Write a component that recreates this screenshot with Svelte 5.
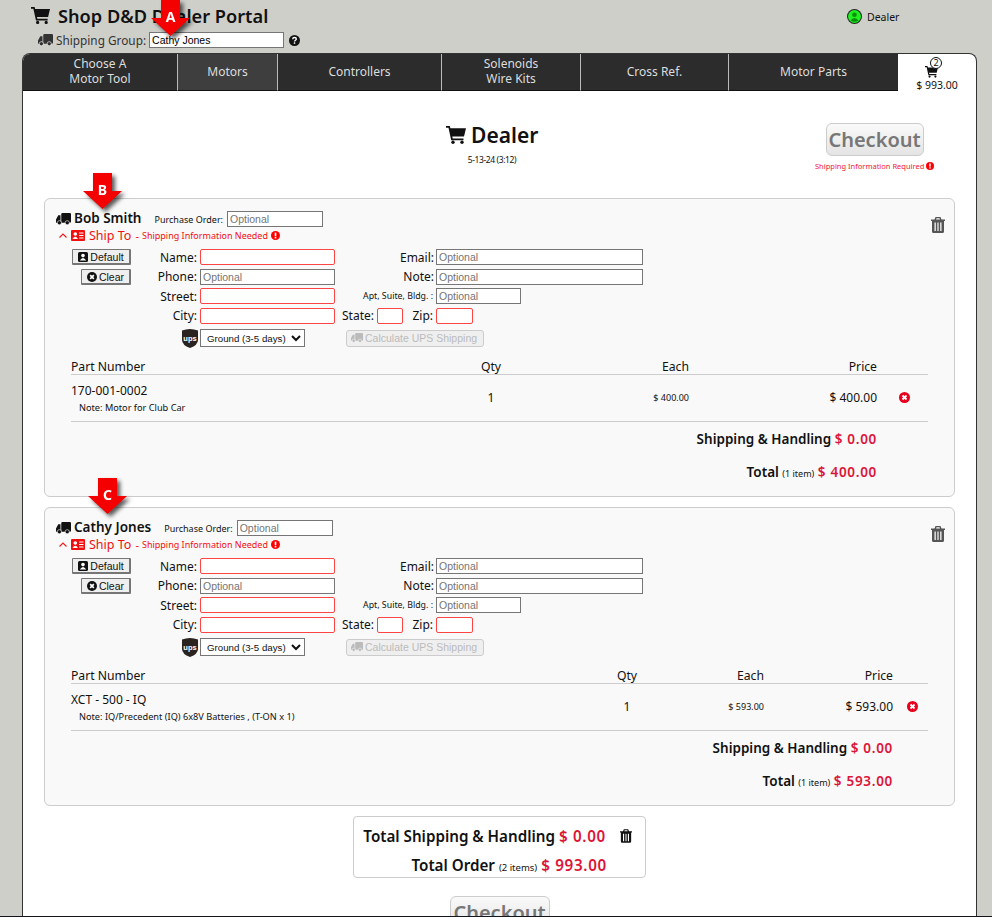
<script lang="ts">
	const tabs = [
		{ label: ['Choose A', 'Motor Tool'], width: 155 },
		{ label: ['Motors'], width: 100, active: true },
		{ label: ['Controllers'], width: 164 },
		{ label: ['Solenoids', 'Wire Kits'], width: 139 },
		{ label: ['Cross Ref.'], width: 148 },
		{ label: ['Motor Parts'], width: 169 }
	]

	const groups = [
		{
			name: 'Bob Smith',
			part: '170-001-0002',
			note: 'Note: Motor for Club Car',
			price: '$ 400.00',
			cols: '399px 42px 177px 188px 51px',
			pad: '51px'
		},
		{
			name: 'Cathy Jones',
			part: 'XCT - 500 - IQ',
			note: 'Note: IQ/Precedent (IQ) 6x8V Batteries , (T-ON x 1)',
			price: '$ 593.00',
			cols: '535px 42px 116px 129px 35px',
			pad: '35px'
		}
	]

	const arrows = [
		{ letter: 'A', x: 150, y: 0 },
		{ letter: 'B', x: 82, y: 173 },
		{ letter: 'C', x: 87, y: 478 }
	]
</script>

{#snippet truck(size = 15, color = '#111')}
	<svg class="icon" width={size} height={size * 0.8} viewBox="0 0 20 16" fill={color}>
		<path d="M7 1.5Q7 0 8.500 0H18.500Q20 0 20 1.500V11.500Q20 13 18.500 13H7ZM6 3V13H0V8.500L3 3Z" />
		<circle cx="4.500" cy="13" r="2.800" stroke="#fff" stroke-width=".8" />
		<circle cx="15" cy="13" r="2.800" stroke="#fff" stroke-width=".8" />
	</svg>
{/snippet}

{#snippet cart(size = 18)}
	<svg class="icon" width={size} height={size * 0.9} viewBox="0 0 20 18" fill="#111">
		<path d="M0 0H3.800L4.400 2.200H20L18 10.500H6.300L6.700 12.500H17.500V14.300H5.200L2.500 1.800H0Z" />
		<circle cx="7" cy="16.300" r="1.700" />
		<circle cx="16" cy="16.300" r="1.700" />
	</svg>
{/snippet}

{#snippet trash(color = '#555', width = 14, height = 16)}
	<svg class="icon" {width} {height} viewBox="0 0 14 16" fill={color}>
		<path d="M4.500 0H9.500L10.500 2.500H14V4H13V14.500Q13 16 11.500 16H2.500Q1 16 1 14.500V4H0V2.500H3.500ZM5.500 1.300 5 2.500H9L8.500 1.300ZM3.500 5.500V14H4.800V5.500ZM6.400 5.500V14H7.600V5.500ZM9.200 5.500V14H10.500V5.500Z" fill-rule="evenodd" />
	</svg>
{/snippet}

{#snippet alert(size = 9)}
	<svg class="icon" width={size} height={size} viewBox="0 0 10 10">
		<circle cx="5" cy="5" r="5" fill="#f00" />
		<rect x="4.100" y="1.800" width="1.800" height="4" fill="#fff" />
		<rect x="4.100" y="6.600" width="1.800" height="1.700" fill="#fff" />
	</svg>
{/snippet}

{#snippet cross(color = '#e8001c', size = 11)}
	<svg class="icon" width={size} height={size} viewBox="0 0 12 12">
		<circle cx="6" cy="6" r="6" fill={color} />
		<path d="M3.800 3.800 8.200 8.200M8.200 3.800 3.800 8.200" stroke="#fff" stroke-width="2" />
	</svg>
{/snippet}

<div class="page">
	<header>
		<h1>
			{@render cart(19)}
			<span>Shop D&amp;D Dealer Portal</span>
		</h1>
		<div class="status">
			<svg class="icon" width="15" height="15" viewBox="0 0 15 15">
				<circle cx="7.500" cy="7.500" r="7.500" fill="#222" />
				<circle cx="7.500" cy="7.500" r="6.500" fill="#1ff01f" />
				<circle cx="7.500" cy="5.800" r="2.300" fill="#0c8f0c" />
				<path d="M3.500 11.500Q7.500 6.500 11.500 11.500Q7.500 14 3.500 11.500Z" fill="#0c8f0c" />
			</svg>
			<span>Dealer</span>
		</div>
		<div class="group">
			{@render truck(15, '#333')}
			<label for="shipping-group">Shipping Group:</label>
			<input id="shipping-group" value="Cathy Jones" />
			<svg class="icon" width="11" height="11" viewBox="0 0 12 12">
				<circle cx="6" cy="6" r="6" fill="#111" />
				<path d="M4 4.600Q4.100 2.700 6 2.700Q8 2.700 8 4.300C8 5.700 6 5.700 6 7.100" fill="none" stroke="#fff" stroke-width="1.500" />
				<rect x="5.200" y="8" width="1.600" height="1.600" fill="#fff" />
			</svg>
		</div>
	</header>

	<main>
		<nav>
			{#each tabs as tab}
				<button class="tab" class:active={tab.active} style:width="{tab.width}px">
					{#each tab.label as line}<span>{line}</span>{/each}
				</button>
			{/each}
			<div class="cart-tab">
				<span class="badge">2</span>
				<span class="cart-icon">{@render cart(13)}</span>
				<span>$ 993.00</span>
			</div>
		</nav>

		<section class="hero">
			<div></div>
			<div class="hero-title">
				<h2>{@render cart(20)} Dealer</h2>
				<small>5-13-24 (3:12)</small>
			</div>
			<div class="hero-action">
				<button class="checkout">Checkout</button>
				<p>Shipping Information Required {@render alert(8)}</p>
			</div>
		</section>

		{#each groups as group}
			<section class="card">
				<div class="card-head">
					{@render truck(15)}
					<strong>{group.name}</strong>
					<label>Purchase Order: <input placeholder="Optional" /></label>
					<span class="card-trash">{@render trash()}</span>
				</div>

				<div class="ship-to">
					<svg class="icon" width="8" height="5" viewBox="0 0 8 5"><path d="M.5 4.500 4 1 7.500 4.500" fill="none" stroke="#f02020" stroke-width="1.200" /></svg>
					<svg class="icon" width="14" height="11" viewBox="0 0 14 11">
						<rect width="14" height="11" rx="1" fill="#f01010" />
						<circle cx="4.300" cy="4" r="1.800" fill="#fff" />
						<path d="M1.500 9Q4.300 4.500 7 9Z" fill="#fff" />
						<path d="M8 3H12.500M8 5.500H12.500M8 8H12.500" stroke="#fff" />
					</svg>
					<span class="ship-label">Ship To</span>
					<span class="ship-dash">-</span>
					<span class="ship-note">Shipping Information Needed</span>
					{@render alert(9)}
				</div>

				<div class="form">
					<div class="form-actions">
						<button class="small-btn">
							<svg class="icon" width="10" height="10" viewBox="0 0 10 10">
								<rect width="10" height="10" rx="1.500" fill="#111" />
								<circle cx="5" cy="3.600" r="1.800" fill="#fff" />
								<path d="M1.800 8.500Q5 3.500 8.200 8.500Z" fill="#fff" />
							</svg>
							Default
						</button>
						<button class="small-btn">{@render cross('#111', 10)} Clear</button>
					</div>
					<div class="form-rows">
						<div class="form-row">
							<label class="lbl">Name:</label><input class="req" />
							<label class="lbl wide">Email:</label><input class="long" placeholder="Optional" />
						</div>
						<div class="form-row">
							<label class="lbl">Phone:</label><input placeholder="Optional" />
							<label class="lbl wide">Note:</label><input class="long" placeholder="Optional" />
						</div>
						<div class="form-row">
							<label class="lbl">Street:</label><input class="req" />
							<label class="lbl wide tiny">Apt, Suite, Bldg. :</label><input class="apt" placeholder="Optional" />
						</div>
						<div class="form-row">
							<label class="lbl">City:</label><input class="req" />
							<label class="lbl state">State:</label><input class="req short" />
							<label class="lbl zip">Zip:</label><input class="req zip-input" />
						</div>
						<div class="form-row last">
							<span class="lbl ups-cell">
								<svg class="icon" width="16" height="19" viewBox="0 0 16 19">
									<path d="M8 0Q12 0 16 1.500V11Q16 16 8 19Q0 16 0 11V1.500Q4 0 8 0Z" fill="#2a2320" />
									<text x="8" y="12" text-anchor="middle" class="ups-text">ups</text>
								</svg>
							</span>
							<select>
								<option>Ground (3-5 days)</option>
							</select>
							<button class="calc" disabled>{@render truck(12, '#bbb')} Calculate UPS Shipping</button>
						</div>
					</div>
				</div>

				<div class="items" style:--cols={group.cols} style:--pad={group.pad}>
					<div class="items-head">
						<span>Part Number</span>
						<span class="center">Qty</span>
						<span class="right">Each</span>
						<span class="right">Price</span>
						<span></span>
					</div>
					<div class="items-row">
						<div class="part">
							<span>{group.part}</span>
							<small>{group.note}</small>
						</div>
						<span class="center">1</span>
						<span class="right each">{group.price}</span>
						<span class="right">{group.price}</span>
						<span class="remove">{@render cross()}</span>
					</div>
					<div class="sums">
						<div>Shipping &amp; Handling <em>$ 0.00</em></div>
						<div>Total <small>(1 item)</small> <em>{group.price}</em></div>
					</div>
				</div>
			</section>
		{/each}

		<section class="summary">
			<div class="summary-row">
				<span>Total Shipping &amp; Handling <em>$ 0.00</em></span>
				{@render trash('#111', 12, 14)}
			</div>
			<div class="summary-row">
				<span>Total Order <small>(2 items)</small> <em>$ 993.00</em></span>
			</div>
		</section>

		<div class="bottom-action">
			<button class="checkout">Checkout</button>
		</div>
	</main>

	{#each arrows as arrow}
		<div class="arrow" style:left="{arrow.x}px" style:top="{arrow.y}px">
			<svg width="41" height="37" viewBox="0 0 41 37">
				<path d="M11 0H30V18H40L20.500 36 1 18H11Z" fill="#f40000" />
			</svg>
			<span>{arrow.letter}</span>
		</div>
	{/each}
</div>

<style>
	:global(body) {
		background: #cfcfca;
	}

	.page {
		position: relative;
		height: 917px;
		overflow: hidden;
		box-sizing: border-box;
		border-bottom: 1px solid #14141e;
		font-family: 'Noto Sans', sans-serif;
		color: #111;
	}

	.icon {
		display: inline-block;
		flex: none;
		vertical-align: -1px;
	}

	button,
	input,
	select {
		font-family: 'Liberation Sans', sans-serif;
		box-sizing: border-box;
	}

	input {
		height: 16px;
		width: 135px;
		padding: 0 2px;
		margin: 0;
		border: 1px solid #767676;
		background: #fff;
		font-size: 10.500px;
		color: #000;
	}

	input::placeholder {
		color: #757575;
	}

	header {
		display: grid;
		grid-template-columns: 1fr 145px;
		grid-template-rows: 25px 16px;
		height: 53px;
		padding: 3px 0 0 31px;
		box-sizing: border-box;
	}

	h1 {
		display: flex;
		align-items: center;
		gap: 8px;
		height: 25px;
		margin: 0;
		font-size: 18.200px;
		font-weight: 600;
	}

	.status {
		display: flex;
		align-items: center;
		gap: 5px;
		height: 25px;
		font-size: 10.500px;
		margin-top: 1px;
	}

	.group {
		display: flex;
		align-items: center;
		gap: 3px;
		grid-column: 1 / -1;
		height: 16px;
		margin: 4px 0 0 7px;
		font-size: 11.800px;
		color: #333;
	}

	.group input {
		margin-right: 2px;
		width: 135px;
		height: 16px;
	}

	main {
		width: 955px;
		height: 880px;
		margin-left: 22px;
		box-sizing: border-box;
		background: #fff;
		border: 1px solid #333;
		border-bottom: 0;
		border-radius: 8px 8px 0 0;
		overflow: hidden;
	}

	nav {
		display: flex;
		height: 37px;
	}

	.tab {
		display: flex;
		flex-direction: column;
		align-items: center;
		justify-content: center;
		box-sizing: border-box;
		padding: 0 0 2px;
		border: 0;
		border-right: 1px solid #bbb;
		border-bottom: 1px solid #111;
		background: #2c2c2c;
		color: #ddd;
		font-family: 'Noto Sans', sans-serif;
		font-size: 12px;
		line-height: 15px;
	}

	.tab:nth-child(6) {
		border-right: 0;
	}

	.tab.active {
		background: #3e3e3e;
	}

	.cart-tab {
		position: relative;
		display: flex;
		flex-direction: column;
		align-items: center;
		flex: 1;
		padding-top: 12px;
		box-sizing: border-box;
		font-size: 10.500px;
		line-height: 12px;
		gap: 1px;
	}

	.cart-icon {
		display: flex;
		margin-right: 12px;
	}

	.badge {
		position: absolute;
		top: 3px;
		left: 32px;
		width: 12px;
		height: 12px;
		box-sizing: border-box;
		border: 1px solid #111;
		border-radius: 50%;
		background: #fff;
		font-size: 9px;
		line-height: 10px;
		text-align: center;
	}

	.hero {
		display: grid;
		grid-template-columns: 340px 216px 1fr;
		height: 107px;
		margin: 0 21px;
		padding-top: 32px;
		box-sizing: border-box;
	}

	.hero-title {
		text-align: center;
	}

	.hero-title h2 {
		margin: 0;
		font-size: 21px;
		line-height: 25px;
		font-weight: 600;
	}

	.hero-title small {
		display: block;
		margin-top: 3px;
		font-size: 8.500px;
		letter-spacing: -0.4px;
		line-height: 18px;
	}

	.hero-action {
		justify-self: end;
		width: 119px;
		margin-right: 21px;
		text-align: center;
	}

	.hero-action p {
		margin: 4px 0 0;
		font-size: 7.500px;
		line-height: 12px;
		color: #f01838;
		white-space: nowrap;
	}

	.checkout {
		width: 98px;
		height: 33px;
		padding: 0;
		border: 1px solid #ccc;
		border-radius: 6px;
		background: linear-gradient(#fafafa, #e4e4e4);
		font-family: 'Noto Sans', sans-serif;
		font-size: 20px;
		font-weight: 600;
		color: #777;
	}

	.card {
		position: relative;
		height: 299px;
		margin: 0 21px 10px;
		padding: 12px 11px 0;
		box-sizing: border-box;
		background: #f9f9f9;
		border: 1px solid #ccc;
		border-radius: 6px;
	}

	.card-head {
		display: flex;
		align-items: center;
		gap: 3px;
		height: 16px;
	}

	.card-head strong {
		font-size: 13.500px;
		font-weight: 600;
		line-height: 14px;
		margin-right: 10px;
		margin-top: -2px;
	}

	.card-head label {
		display: flex;
		align-items: center;
		gap: 4px;
		font-size: 9px;
	}

	.card-head input {
		width: 96px;
	}

	.card-trash {
		position: absolute;
		top: 16px;
		right: 9px;
	}

	.ship-to {
		display: flex;
		align-items: center;
		height: 16px;
		margin-left: 3px;
		color: #f01010;
	}

	.ship-to svg:nth-child(2) {
		margin: 0 4px;
	}

	.ship-label {
		font-size: 12.500px;
	}

	.ship-dash {
		margin: 0 3px 0 4px;
		font-size: 11px;
	}

	.ship-note {
		margin-right: 3px;
		font-size: 9px;
	}

	.form {
		display: flex;
		margin: 6px 0 0 16px;
	}

	.form-actions {
		display: flex;
		flex-direction: column;
		align-items: flex-end;
		gap: 4px;
		width: 59px;
	}

	.small-btn {
		display: flex;
		align-items: center;
		justify-content: center;
		gap: 2px;
		height: 16px;
		padding: 0 3px;
		border: 1px solid #767676;
		border-bottom-width: 2px;
		border-right-width: 2px;
		border-radius: 1px;
		background: #efefef;
		font-size: 10.500px;
		color: #111;
		white-space: nowrap;
	}

	.form-actions .small-btn:first-child {
		width: 59px;
	}

	.form-actions .small-btn:last-child {
		width: 50px;
	}

	.form-rows {
		display: flex;
		flex-direction: column;
		gap: 3.500px;
	}

	.form-row {
		display: flex;
		align-items: center;
		height: 16px;
	}

	.form-row.last {
		height: 18px;
		margin-top: 2px;
	}

	.lbl {
		width: 66px;
		margin-right: 3px;
		text-align: right;
		font-size: 12px;
		white-space: nowrap;
	}

	.lbl.wide {
		width: 99px;
		margin-right: 2px;
	}

	.lbl.tiny {
		font-size: 8.800px;
		margin-right: 3px;
		width: 98px;
	}

	.lbl.state {
		width: 39px;
		margin-right: 3px;
	}

	.lbl.zip {
		width: 30px;
		margin-right: 3px;
	}

	.ups-cell {
		display: flex;
		justify-content: flex-end;
		margin-right: 2px;
		width: 67px;
	}

	.ups-text {
		font-family: 'Liberation Sans', sans-serif;
		font-size: 7.500px;
		font-weight: 700;
		fill: #fff;
	}

	.req {
		border-color: #f44;
		border-radius: 2px;
	}

	.long {
		width: 207px;
	}

	.apt {
		width: 85px;
	}

	.short {
		width: 26px;
	}

	.zip-input {
		width: 37px;
	}

	select {
		width: 105px;
		height: 18px;
		padding: 0 0 0 2px;
		border: 1px solid #767676;
		background: #fff;
		font-size: 9.700px;
		color: #111;
	}

	.calc {
		display: flex;
		align-items: center;
		gap: 2px;
		width: 138px;
		height: 17px;
		margin-left: 41px;
		padding: 0 4px;
		border: 1px solid #ccc;
		border-radius: 3px;
		background: #efefef;
		font-size: 10.500px;
		color: #bbb;
		white-space: nowrap;
	}

	.items {
		margin: 10px 15px 0;
	}

	.items-head,
	.items-row {
		display: grid;
		grid-template-columns: var(--cols);
	}

	.items-head {
		height: 18px;
		box-sizing: border-box;
		border-bottom: 1px solid #ccc;
		font-size: 12.200px;
		line-height: 19px;
	}

	.items-row {
		align-items: center;
		height: 47px;
		box-sizing: border-box;
		border-bottom: 1px solid #ccc;
		font-size: 12px;
	}

	.items-row > span {
		margin-top: -2px;
	}

	.center {
		text-align: center;
	}

	.right {
		text-align: right;
	}

	.each {
		font-size: 9px;
	}

	.part {
		display: flex;
		flex-direction: column;
		gap: 2px;
	}

	.part small {
		margin-left: 8px;
		font-size: 9.200px;
		white-space: nowrap;
	}

	.remove {
		display: flex;
		justify-content: center;
		padding-left: 3px;
	}

	.sums {
		display: grid;
		grid-auto-rows: 33px;
		align-items: center;
		justify-items: end;
		font-size: 13.500px;
		font-weight: 600;
		padding-right: var(--pad);
	}

	.sums small {
		font-size: 9px;
		font-weight: 400;
	}

	em {
		font-style: normal;
		color: #dc1438;
		font-weight: 600;
		letter-spacing: 0.7px;
	}

	.summary {
		width: 293px;
		height: 62px;
		margin: 0 auto;
		box-sizing: border-box;
		padding: 4px 13px 0 0;
		background: #fff;
		border: 1px solid #ccc;
		border-radius: 4px;
		font-size: 15.200px;
		font-weight: 600;
	}

	.summary-row {
		display: flex;
		align-items: center;
		justify-content: flex-end;
		gap: 14px;
		height: 29px;
	}

	.summary-row:last-child {
		padding-right: 25px;
	}

	.summary small {
		font-size: 9.500px;
		font-weight: 400;
	}

	.bottom-action {
		display: flex;
		justify-content: center;
		margin-top: 18px;
	}

	.bottom-action .checkout {
		width: 100px;
	}

	.arrow {
		position: absolute;
		width: 41px;
		height: 37px;
		filter: drop-shadow(3px 3px 2px rgba(0, 0, 0, 0.65));
	}

	.arrow svg {
		display: block;
	}

	.arrow span {
		position: absolute;
		top: 8px;
		left: 0;
		width: 41px;
		text-align: center;
		font-size: 14px;
		font-weight: 700;
		line-height: 18px;
		color: #fff;
	}
</style>
